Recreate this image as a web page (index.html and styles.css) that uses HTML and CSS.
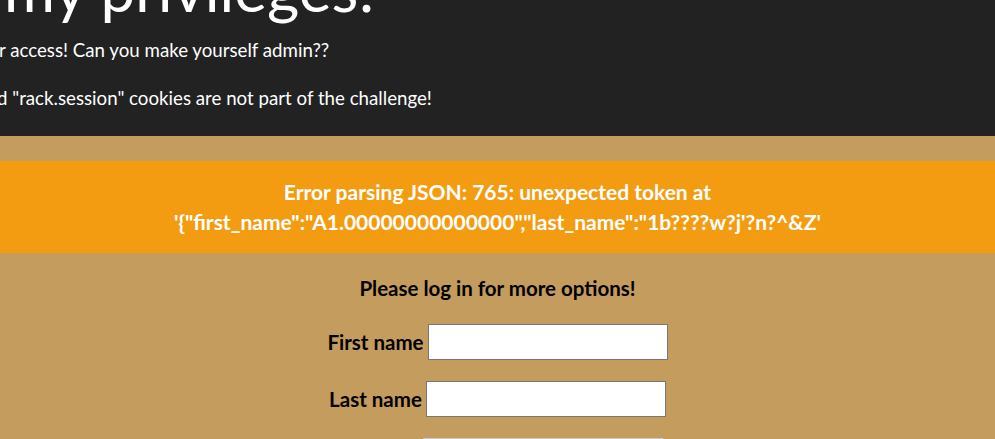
FILE: index.html
```html
<!DOCTYPE html>
<html>
<head>
<meta charset="utf-8">
<link rel="stylesheet" href="styles.css">
</head>
<body>
<header class="top">
  <h1 class="title">my privileges!</h1>
  <p class="intro intro-1">r access! Can you make yourself admin??</p>
  <p class="intro intro-2">d "rack.session" cookies are not part of the challenge!</p>
</header>
<main class="content">
  <div class="error">Error parsing JSON: 765: unexpected token at<br>'{"first_name":"A1.00000000000000","last_name":"1b????w?j'?n?^&amp;Z'</div>
  <form class="login">
    <p class="prompt">Please log in for more options!</p>
    <div class="row"><label for="fn">First name</label><input id="fn" type="text"></div>
    <div class="row"><label for="ln">Last name</label><input id="ln" type="text"></div>
    <div class="row"><label for="pw">Password</label><input id="pw" class="field-muted" type="password"></div>
  </form>
</main>
</body>
</html>
```
FILE: styles.css
```css
html, body {
  margin: 0;
  padding: 0;
}
body {
  font-family: Lato, "Open Sans", sans-serif;
  background: #c49c5e;
  overflow: hidden;
  height: 439px;
}
.top {
  background: #222222;
  color: #fff;
  height: 136px;
  overflow: hidden;
}
.title {
  font-weight: 400;
  font-size: 62px;
  line-height: 62px;
  margin: -43px 0 0 4px;
}
.intro {
  font-size: 18.7px;
  line-height: 24px;
  margin: 0;
}
.intro-1 {
  margin: 19px 0 0 -1px;
}
.intro-2 {
  margin: 24px 0 0 -3px;
}
.content {
  padding-top: 25px;
}
.error {
  background: #f39c12;
  color: #fff;
  font-weight: 700;
  font-size: 21px;
  line-height: 30px;
  text-align: center;
  padding: 16px 0 16px;
}
.login {
  font-weight: 700;
  font-size: 20.5px;
}
.prompt {
  text-align: center;
  margin: 20px 0 21px;
  line-height: 30px;
}
.row {
  display: flex;
  justify-content: center;
  align-items: center;
  gap: 4px;
  margin-bottom: 21px;
  height: 36px;
}
.row label {
  font-weight: 700;
}
.row input {
  width: 240px;
  height: 36px;
  box-sizing: border-box;
  border: 1px solid #767676;
  background: #fff;
  padding: 0 4px;
  font-size: 16px;
}
.row .field-muted {
  border-color: #c8cdc8;
  background: #eeeeee;
}
```
